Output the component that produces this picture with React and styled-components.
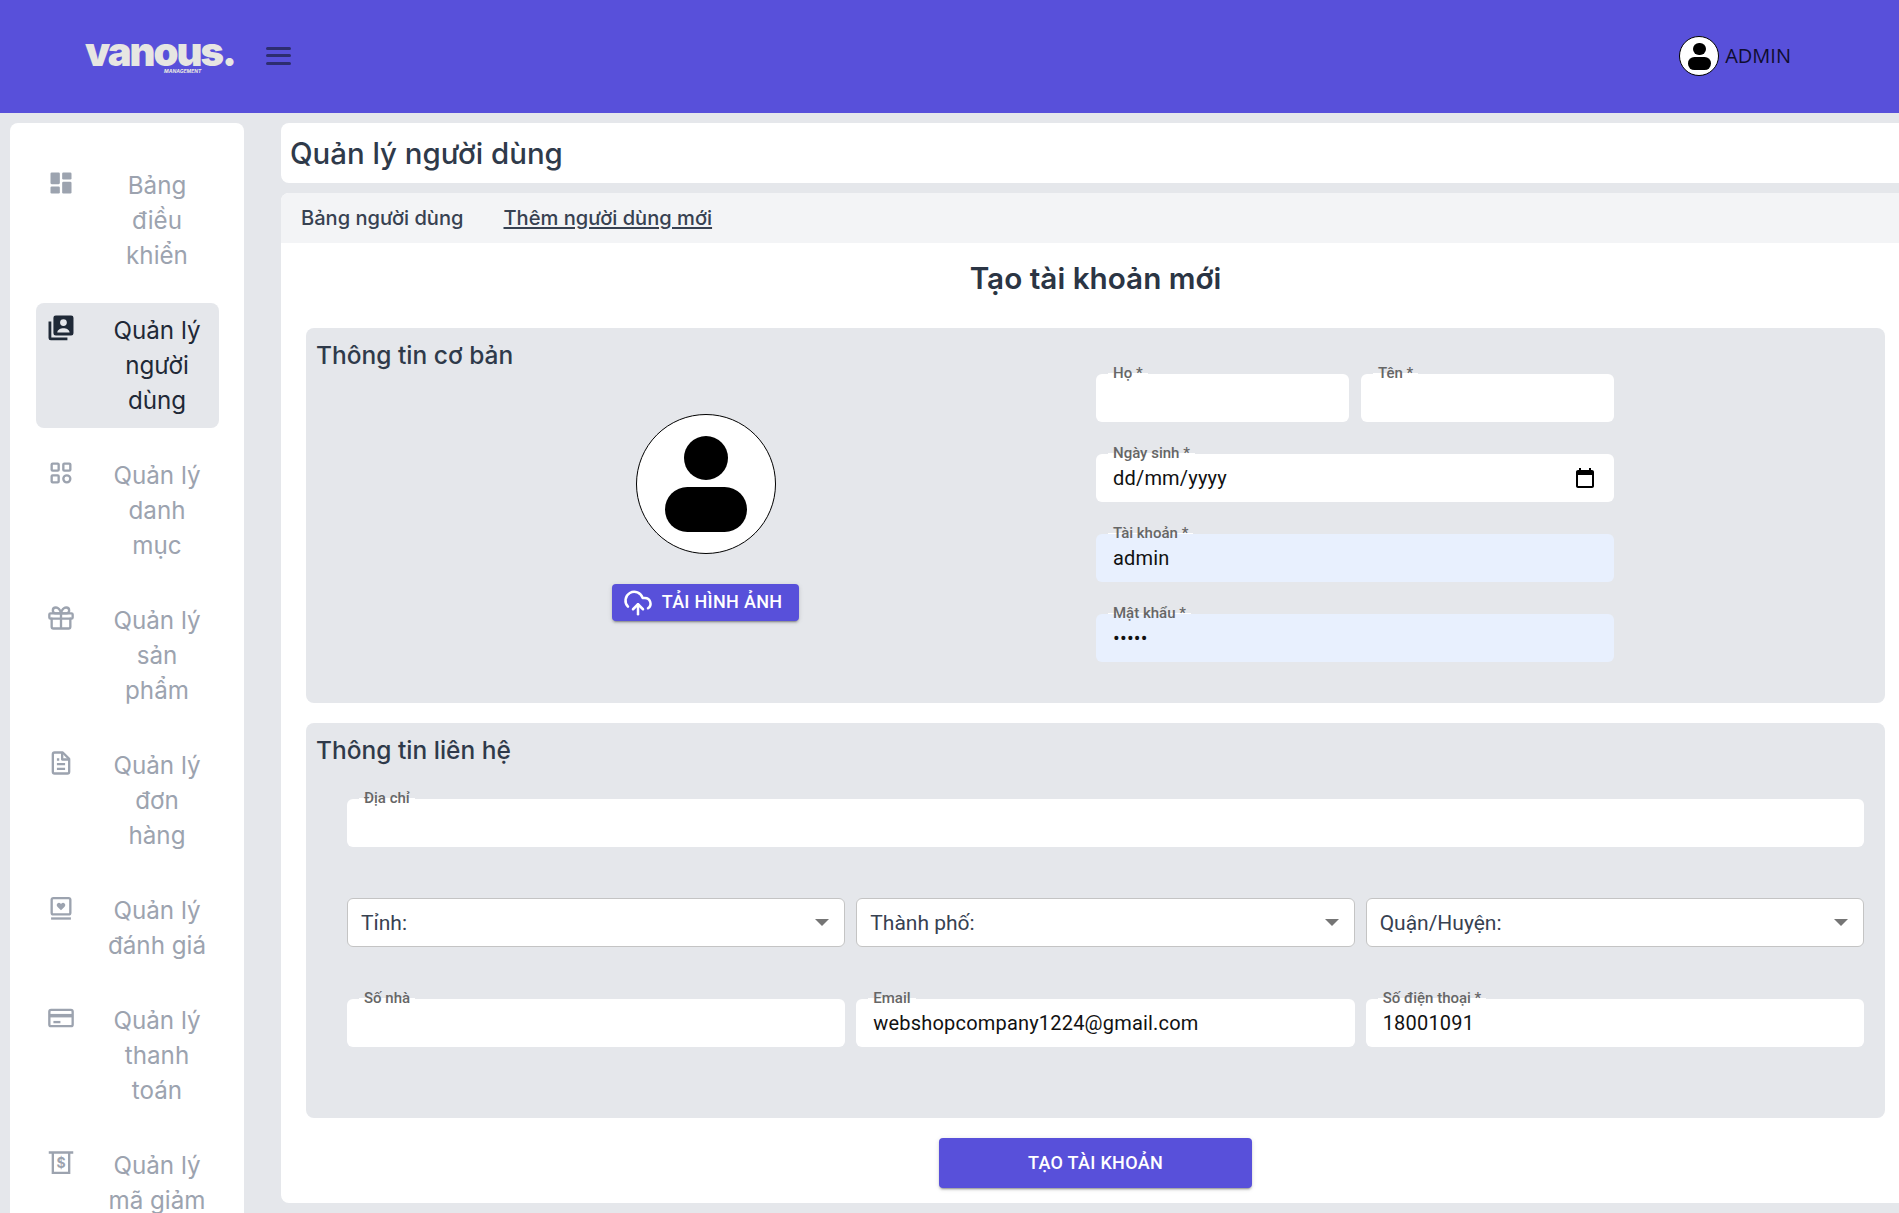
import React from "react";
import styled, { createGlobalStyle } from "styled-components";
import { CloudUpload } from "lucide-react";

const Global = createGlobalStyle`
  html, body { margin: 0; padding: 0; height: 100%; overflow: hidden; background: #e5e7eb; }
  * { box-sizing: border-box; }
  #root { height: 100%; }
`;
const Page = styled.div`
  width: 1899px; height: 1213px; overflow: hidden; background: #e5e7eb;
  font-family: Inter, "Noto Sans", sans-serif; display: flex; flex-direction: column;
`;
const Header = styled.header`
  height: 113px; flex: none; background: #5850da; display: flex; align-items: center;
  padding: 0 108px 2px 85px;
`;
const Logo = styled.div`
  position: relative; width: 148px; height: 40px; color: #e6e6e2; font: 900 40px/40px Inter, sans-serif; letter-spacing: -2px;
  margin-top: -7px;
`;
const LogoSub = styled.span`
  position: absolute; left: 79px; top: 36px; font: italic 700 5px/6px Inter, sans-serif; letter-spacing: 0; white-space: nowrap;
`;
const Burger = styled.button`
  margin-left: 33px; width: 25px; height: 18px; padding: 0; border: 0; background: none; display: flex; flex-direction: column; justify-content: space-between;
  span { display: block; height: 3px; border-radius: 2px; background: #2d2d70; }
`;
const UserBox = styled.div`
  margin-left: auto; display: flex; align-items: center; gap: 6px; color: #0f0d30; font: 400 20px/28px "Open Sans", sans-serif;
`;
const AvatarCircle = styled.div`
  width: ${p => p.$size}px; height: ${p => p.$size}px; border-radius: 50%; background: #fff; border: 1px solid #000;
  display: flex; flex-direction: column; align-items: center; flex: none;
  padding-top: ${p => p.$size * 0.15}px; gap: ${p => p.$size * 0.05}px;
  i { display: block; width: ${p => p.$size * 0.315}px; height: ${p => p.$size * 0.315}px; border-radius: 50%; background: #000; }
  b { display: block; width: ${p => p.$size * 0.585}px; height: ${p => p.$size * 0.32}px; border-radius: ${p => p.$size * 0.16}px; background: #000; }
`;
const Body = styled.div`
  flex: 1; display: flex; align-items: flex-start; padding: 10px 0 0 10px; gap: 37px; min-height: 0;
`;
const Sidebar = styled.nav`
  width: 234px; flex: none; background: #fff; border-radius: 8px; padding: 35px 25px 40px 26px; display: flex; flex-direction: column; gap: 20px;
`;
const NavItem = styled.a`
  display: flex; align-items: flex-start; padding: 10px 0 10px 11px; border-radius: 8px;
  background: ${p => (p.$active ? "#e5e7eb" : "transparent")}; color: ${p => (p.$active ? "#1f2937" : "#9ca3af")};
  svg { width: 28px; height: 28px; flex: none; margin-top: 1px; }
`;
const NavText = styled.span`
  width: 106px; margin-left: 29px; text-align: center; font-size: 24.2px; line-height: 35px; font-weight: 400;
`;
const Main = styled.main`
  width: 1630px; flex: none; display: flex; flex-direction: column; gap: 10px;
`;
const TitleBar = styled.h1`
  margin: 0; height: 60px; background: #fff; border-radius: 8px 0 0 8px; padding-left: 9px; display: flex; align-items: center;
  font-size: 29.4px; font-weight: 500; color: #2f3a4a;
`;
const Card = styled.section`
  background: #fff; border-radius: 8px; overflow: hidden;
`;
const Tabs = styled.div`
  height: 50px; background: #f3f4f6; display: flex; align-items: center; padding-left: 20px; gap: 40px;
  font-size: 20.1px; font-weight: 500; color: #374151;
`;
const Tab = styled.a`
  text-decoration: ${p => (p.$current ? "underline" : "none")};
`;
const Content = styled.div`
  padding: 16px 26px 15px 25px; display: flex; flex-direction: column; align-items: stretch;
`;
const Heading = styled.h2`
  margin: 0 0 29px; padding-bottom: 1px; height: 40px; text-align: center; font-size: 29.7px; line-height: 38px; font-weight: 600; color: #2b3544;
`;
const Panel = styled.div`
  background: #e5e7eb; border-radius: 8px; padding: 12px 10px 8px; height: ${p => p.$h}px; margin-bottom: ${p => p.$mb}px;
`;
const PanelTitle = styled.h3`
  margin: 0; font-size: 24.5px; line-height: 30px; font-weight: 500; color: #2f3a4a;
`;
const BasicGrid = styled.div`
  display: grid; grid-template-columns: 780px 518px;
`;
const LeftCol = styled.div`
  display: flex; flex-direction: column;
`;
const AvatarCol = styled.div`
  display: flex; flex-direction: column; align-items: center; padding-top: 44px;
`;
const UploadButton = styled.button`
  margin: 30px 2px 0 0; height: 37px; width: 187px; border: 0; border-radius: 4px; background: #5850da; color: #fff;
  font: 500 18px/24px Roboto, sans-serif; letter-spacing: .3px; display: flex; align-items: center; justify-content: center; gap: 9px; padding: 0 3px 2px 0;
  box-shadow: 0 3px 1px -2px rgba(0,0,0,.2), 0 2px 2px rgba(0,0,0,.14), 0 1px 5px rgba(0,0,0,.12);
  svg { margin-top: 2px; margin-left: -2px; }
`;
const FieldsCol = styled.div`
  display: grid; grid-template-columns: minmax(0, 1fr) minmax(0, 1fr); column-gap: 12px; row-gap: 32px; padding-top: 34px;
`;
const Field = styled.div`
  position: relative; height: 48px; min-width: 0; grid-column: ${p => (p.$wide ? "1 / -1" : "auto")};
  background: ${p => (p.$filled ? "#e8f0fe" : "#fff")}; border-radius: 6px; display: flex; align-items: center; padding: 0 17px;
`;
const FieldLabel = styled.label`
  position: absolute; left: 12px; top: -10px; padding: 0 5px; font: 500 15px/18px Roboto, sans-serif; color: #666;
  background: linear-gradient(to bottom, transparent 9px, #fff 9px, #fff 10px, transparent 10px);
`;
const TextInput = styled.input`
  flex: 1; min-width: 0; border: 0; outline: 0; padding: 0; background: transparent; color: #111; font: 400 20px/28px Roboto, sans-serif; letter-spacing: .19px;
`;
const CalendarIcon = styled.svg`
  width: 24px; height: 24px; flex: none;
`;
const ContactBlock = styled.div`
  padding: 34px 11px 0 31px; display: flex; flex-direction: column;
`;
const SelectRow = styled.div`
  display: grid; grid-template-columns: repeat(3, minmax(0, 1fr)); gap: 11px;
  margin-top: ${p => p.$mt}px;
`;
const SelectBox = styled.div`
  height: 49px; background: #fff; border: 1px solid #c4c4c4; border-radius: 6px; display: flex; align-items: center; justify-content: space-between;
  padding: 0 15px 0 13px; font: 400 21px/28px Roboto, sans-serif; color: #374151;
`;
const Caret = styled.span`
  width: 0; height: 0; border-left: 7px solid transparent; border-right: 7px solid transparent; border-top: 7px solid #757575;
`;
const Submit = styled.button`
  align-self: center; width: 313px; height: 50px; border: 0; border-radius: 4px; background: #5850da; color: #fff; font: 500 18px/24px Roboto, sans-serif; letter-spacing: .3px;
  box-shadow: 0 3px 1px -2px rgba(0,0,0,.2), 0 2px 2px rgba(0,0,0,.14), 0 1px 5px rgba(0,0,0,.12);
`;

const Dash = () => (<svg viewBox="0 0 24 24" fill="currentColor"><rect x="3" y="3" width="8" height="10" rx="1"/><rect x="3" y="15" width="8" height="6" rx="1"/><rect x="13" y="3" width="8" height="6" rx="1"/><rect x="13" y="11" width="8" height="10" rx="1"/></svg>);
const Users = () => (<svg viewBox="0 0 24 24" fill="currentColor"><path d="M1.300 6.500v14a2 2 0 0 0 2 2H17.500v-2.400H3.700V6.500z"/><path fillRule="evenodd" d="M7.500 1.300h13.200a2 2 0 0 1 2 2v13.200a2 2 0 0 1-2 2H7.500a2 2 0 0 1-2-2V3.300a2 2 0 0 1 2-2zM14.100 4.400a2.900 2.900 0 1 0 0 5.800 2.900 2.900 0 0 0 0-5.800zM8.800 15.800h10.600c-.2-2.200-2.800-3.500-5.300-3.500s-5.100 1.300-5.300 3.500z"/></svg>);
const Grid = () => (<svg viewBox="0 0 24 24" fill="none" stroke="currentColor" strokeWidth="2"><rect x="4" y="4" width="6" height="6" rx=".8"/><rect x="14" y="4" width="6" height="6" rx=".8"/><rect x="4" y="14" width="6" height="6" rx=".8"/><circle cx="17" cy="17" r="3"/></svg>);
const Gift = () => (<svg viewBox="0 0 24 24" fill="none" stroke="currentColor" strokeWidth="2" strokeLinejoin="round" strokeLinecap="round"><rect x="2" y="8" width="20" height="4.500" rx="1"/><path d="M4 12.500v7a1.500 1.500 0 0 0 1.500 1.500h13a1.500 1.500 0 0 0 1.500-1.500v-7M12 8v13"/><path d="M12 8S11 3 7.500 3a2.500 2.500 0 0 0 0 5zM12 8s1-5 4.500-5a2.500 2.500 0 0 1 0 5z"/></svg>);
const Doc = () => (<svg viewBox="0 0 24 24" fill="none" stroke="currentColor" strokeWidth="2" strokeLinejoin="round"><path d="M6.500 3h7L19 8.500V19.500a1.500 1.500 0 0 1-1.500 1.500h-11A1.500 1.500 0 0 1 5 19.500v-15A1.500 1.500 0 0 1 6.500 3z"/><path d="M13 3v6h6M8.500 9h2M8.500 13h7M8.500 17h7"/></svg>);
const Review = () => (<svg viewBox="0 0 24 24" fill="none" stroke="currentColor" strokeWidth="2"><rect x="4" y="3.500" width="16" height="14" rx="1.500"/><path d="M3.500 21h17" /><path fill="currentColor" stroke="none" d="M12 14l-3.100-3.100a1.900 1.900 0 0 1 0-2.700 1.900 1.900 0 0 1 2.700 0l.4.400.4-.4a1.900 1.900 0 0 1 2.700 0 1.900 1.900 0 0 1 0 2.700z"/></svg>);
const Payment = () => (<svg viewBox="0 0 24 24" fill="none" stroke="currentColor" strokeWidth="2"><rect x="2" y="5" width="20" height="14" rx="1.500"/><path d="M2 10h20" strokeWidth="3"/><path d="M5.500 15.500h6"/></svg>);
const Coupon = () => (<svg viewBox="0 0 24 24" fill="none" stroke="currentColor" strokeWidth="2"><path d="M1.500 3h21M5 3V20.500h14V3"/><text x="12" y="16.500" textAnchor="middle" fontSize="12" fontWeight="700" fontFamily="Inter, sans-serif" fill="currentColor" stroke="none">$</text></svg>);

const nav = [
  ["Bảng điều khiển", Dash],
  ["Quản lý người dùng", Users, true],
  ["Quản lý danh mục", Grid],
  ["Quản lý sản phẩm", Gift],
  ["Quản lý đơn hàng", Doc],
  ["Quản lý đánh giá", Review],
  ["Quản lý thanh toán", Payment],
  ["Quản lý mã giảm giá", Coupon],
];

const F = ({ label, value, wide, filled, type, children }) => (
  <Field $wide={wide} $filled={filled}>
    <FieldLabel>{label}</FieldLabel>
    <TextInput type={type || "text"} defaultValue={value} />
    {children}
  </Field>
);

export default function App() {
  return (
    <Page>
      <Global />
      <Header>
        <Logo>vanous.<LogoSub>MANAGEMENT</LogoSub></Logo>
        <Burger aria-label="menu"><span /><span /><span /></Burger>
        <UserBox><AvatarCircle $size={40}><i /><b /></AvatarCircle>ADMIN</UserBox>
      </Header>
      <Body>
        <Sidebar>
          {nav.map(([t, I, a]) => (
            <NavItem key={t} $active={a}><I /><NavText>{t}</NavText></NavItem>
          ))}
        </Sidebar>
        <Main>
          <TitleBar>Quản lý người dùng</TitleBar>
          <Card>
            <Tabs><Tab>Bảng người dùng</Tab><Tab $current>Thêm người dùng mới</Tab></Tabs>
            <Content>
              <Heading>Tạo tài khoản mới</Heading>
              <Panel $h={375} $mb={20}>
                <BasicGrid>
                  <LeftCol>
                    <PanelTitle>Thông tin cơ bản</PanelTitle>
                    <AvatarCol>
                      <AvatarCircle $size={140}><i /><b /></AvatarCircle>
                      <UploadButton><CloudUpload size={30} />TẢI HÌNH ẢNH</UploadButton>
                    </AvatarCol>
                  </LeftCol>
                  <FieldsCol>
                    <F label="Họ *" />
                    <F label="Tên *" />
                    <F wide label="Ngày sinh *" value="dd/mm/yyyy">
                      <CalendarIcon viewBox="0 0 24 24" fill="#000"><path d="M19 4h-1V2h-2v2H8V2H6v2H5c-1.100 0-2 .9-2 2v14c0 1.100.9 2 2 2h14c1.100 0 2-.9 2-2V6c0-1.100-.9-2-2-2zm0 16H5V9h14v11z"/></CalendarIcon>
                    </F>
                    <F wide filled label="Tài khoản *" value="admin" />
                    <F wide filled label="Mật khẩu *" type="password" value="admin" />
                  </FieldsCol>
                </BasicGrid>
              </Panel>
              <Panel $h={395} $mb={20}>
                <PanelTitle>Thông tin liên hệ</PanelTitle>
                <ContactBlock>
                  <F label="Địa chỉ" />
                  <SelectRow $mt={51}>
                    <SelectBox>Tỉnh:<Caret /></SelectBox>
                    <SelectBox>Thành phố:<Caret /></SelectBox>
                    <SelectBox>Quận/Huyện:<Caret /></SelectBox>
                  </SelectRow>
                  <SelectRow $mt={52}>
                    <F label="Số nhà" />
                    <F label="Email" value="webshopcompany1224@gmail.com" />
                    <F label="Số điện thoại *" value="18001091" />
                  </SelectRow>
                </ContactBlock>
              </Panel>
              <Submit>TẠO TÀI KHOẢN</Submit>
            </Content>
          </Card>
        </Main>
      </Body>
    </Page>
  );
}
